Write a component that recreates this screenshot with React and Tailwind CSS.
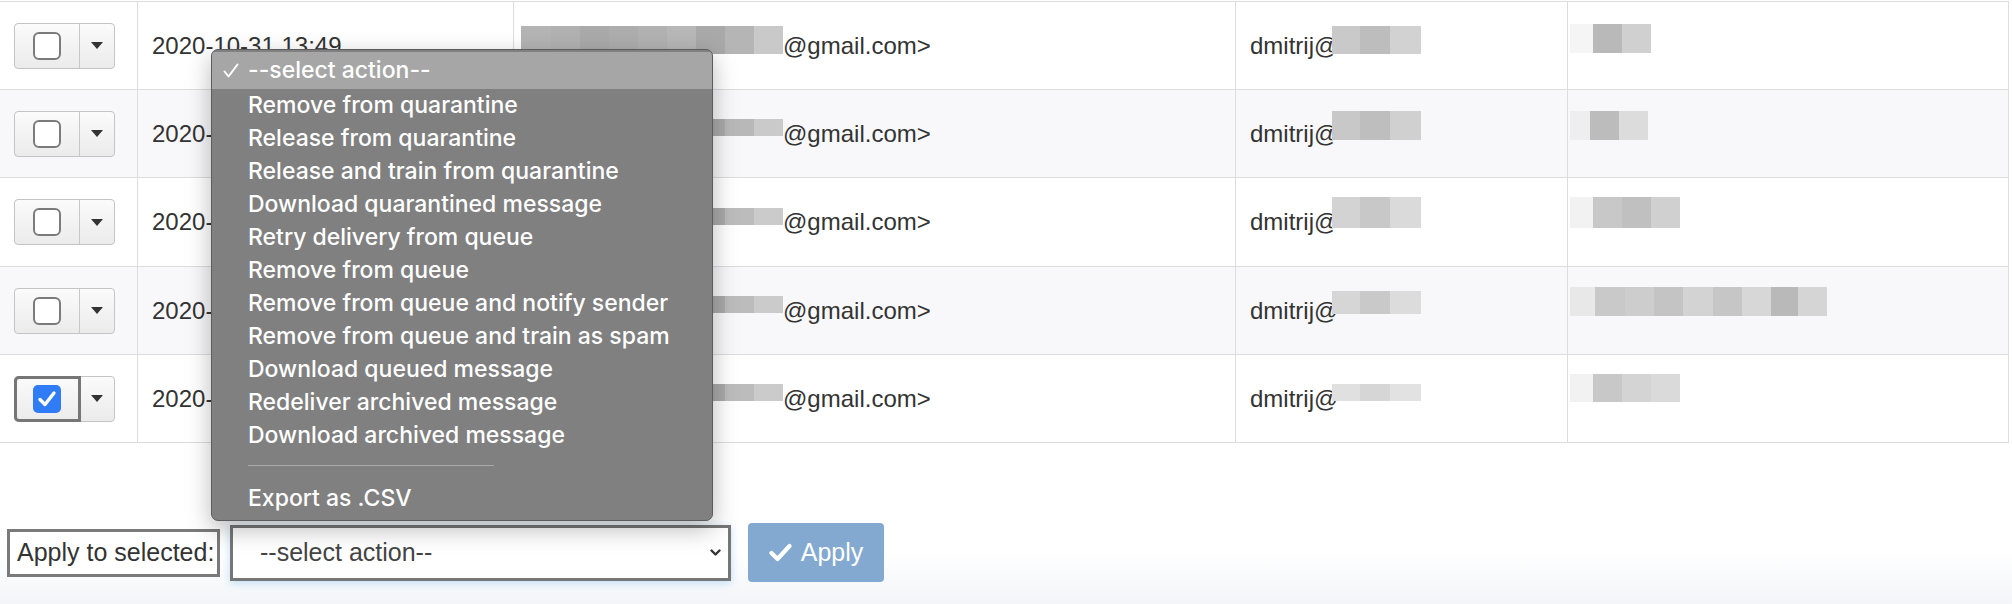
import React from 'react';
import clsx from 'clsx';

const menuItems = [
  'Remove from quarantine',
  'Release from quarantine',
  'Release and train from quarantine',
  'Download quarantined message',
  'Retry delivery from queue',
  'Remove from queue',
  'Remove from queue and notify sender',
  'Remove from queue and train as spam',
  'Download queued message',
  'Redeliver archived message',
  'Download archived message',
];

// redacted bits of the screenshot: [width, colour]
const rows = [
  {
    h: 'h-[88px]',
    striped: false,
    checked: false,
    fromTiles: [[30, '#b4b4b4'], [29, '#b1b1b1'], [29, '#aaaaaa'], [29, '#adadad'], [29, '#b2b2b2'], [29, '#b7b7b7'], [29, '#a9a9a9'], [29, '#b5b5b5'], [29, '#c9c9c9']],
    fromShift: -6,
    fromH: 28,
    toTiles: [[28, '#c9c9c9'], [30, '#bdbdbd'], [31, '#d2d2d2']],
    toShift: -6,
    toH: 28,
    subjTiles: [[23, '#f5f5f5'], [29, '#b9b9b9'], [29, '#d0d0d0']],
    subjShift: -7,
    subjH: 29,
  },
  {
    h: 'h-[88px]',
    striped: true,
    checked: false,
    fromTiles: [[30, '#bcbcbc'], [29, '#b6b6b6'], [29, '#b0b0b0'], [29, '#b9b9b9'], [29, '#b3b3b3'], [29, '#bdbdbd'], [29, '#aaaaaa'], [29, '#b8b8b8'], [29, '#cacaca']],
    fromShift: -6,
    fromH: 17,
    toTiles: [[28, '#c8c8c8'], [30, '#bebebe'], [31, '#d0d0d0']],
    toShift: -8,
    toH: 29,
    subjTiles: [[20, '#eeeef0'], [29, '#bcbcbc'], [29, '#dcdcdc']],
    subjShift: -8,
    subjH: 29,
  },
  {
    h: 'h-[89px]',
    striped: false,
    checked: false,
    fromTiles: [[30, '#bcbcbc'], [29, '#b6b6b6'], [29, '#b0b0b0'], [29, '#b9b9b9'], [29, '#b3b3b3'], [29, '#bdbdbd'], [29, '#aaaaaa'], [29, '#bcbcbc'], [29, '#cbcbcb']],
    fromShift: -6,
    fromH: 17,
    toTiles: [[28, '#d3d3d3'], [30, '#c8c8c8'], [31, '#dadada']],
    toShift: -10,
    toH: 31,
    subjTiles: [[23, '#f2f2f2'], [29, '#c8c8c8'], [29, '#c0c0c0'], [29, '#d0d0d0']],
    subjShift: -10,
    subjH: 31,
  },
  {
    h: 'h-[88px]',
    striped: true,
    checked: false,
    fromTiles: [[30, '#bcbcbc'], [29, '#b6b6b6'], [29, '#b0b0b0'], [29, '#b9b9b9'], [29, '#b3b3b3'], [29, '#bdbdbd'], [29, '#aaaaaa'], [29, '#bcbcbc'], [29, '#cbcbcb']],
    fromShift: -6,
    fromH: 17,
    toTiles: [[28, '#d6d6d6'], [30, '#c9c9c9'], [31, '#dcdcdc']],
    toShift: -8,
    toH: 23,
    subjTiles: [[25, '#e8e8e8'], [30, '#c9c9c9'], [29, '#cdcdcd'], [29, '#c4c4c4'], [30, '#d3d3d3'], [29, '#c6c6c6'], [29, '#d7d7d7'], [27, '#b9b9b9'], [29, '#d5d5d5']],
    subjShift: -9,
    subjH: 29,
  },
  {
    h: 'h-[88px]',
    striped: false,
    checked: true,
    fromTiles: [[30, '#bcbcbc'], [29, '#b6b6b6'], [29, '#b0b0b0'], [29, '#b9b9b9'], [29, '#b3b3b3'], [29, '#bdbdbd'], [29, '#aaaaaa'], [29, '#bcbcbc'], [29, '#cbcbcb']],
    fromShift: -6,
    fromH: 17,
    toTiles: [[28, '#e0e0e0'], [30, '#d6d6d6'], [31, '#e2e2e2']],
    toShift: -6,
    toH: 17,
    subjTiles: [[23, '#f2f2f2'], [29, '#c8c8c8'], [29, '#d4d4d4'], [29, '#dadada']],
    subjShift: -11,
    subjH: 28,
  },
];

const Mosaic = ({ tiles, h, shift, className }) => (
  <div className={clsx('flex shrink-0', className)} style={{ height: h, transform: `translateY(${shift}px)` }}>
    {tiles.map(([w, c], i) => (
      <div key={i} style={{ width: w, background: c }} />
    ))}
  </div>
);

const SplitCheck = ({ checked }) => (
  <div className="flex h-[46px] w-[101px] rounded-[4px] border border-[#c4c4c4] bg-[linear-gradient(to_bottom,#fbfbfb,#ebebeb)]">
    <div
      className={clsx(
        'flex w-[65px] items-center justify-center rounded-l-[4px] border-r border-[#c8c8c8]',
        checked && 'outline-solid outline-3 outline-offset-[-2px] outline-[#767676]'
      )}
    >
      {checked ? (
        <div className="flex h-[28px] w-[28px] items-center justify-center rounded-[5px] bg-[#2f7cf6]">
          <svg width="20" height="18" viewBox="0 0 20 18">
            <path d="M3 9.5 L8 14.5 L17 3" fill="none" stroke="#fff" strokeWidth="3.4" strokeLinecap="round" strokeLinejoin="round" />
          </svg>
        </div>
      ) : (
        <div className="h-[28px] w-[28px] rounded-[6px] border-2 border-[#7b7b7b] bg-white" />
      )}
    </div>
    <div className="flex flex-1 items-center justify-center">
      <div className="h-0 w-0 border-x-[6px] border-t-[7px] border-x-transparent border-t-[#333]" />
    </div>
  </div>
);

const Row = ({ r }) => (
  <div
    className={clsx(
      'grid grid-cols-[137px_376px_722px_332px_441px] border-b border-[#dddddd]',
      r.h,
      r.striped ? 'bg-[#f8f8fa]' : 'bg-white'
    )}
  >
    <div className="flex items-center pl-[14px]">
      <SplitCheck checked={r.checked} />
    </div>
    <div className="flex items-center border-l border-[#dddddd] pl-[14px] text-[24px]">2020-10-31 13:49</div>
    <div className="flex items-center border-l border-[#dddddd] pl-[7px] text-[24px]">
      <Mosaic tiles={r.fromTiles} h={r.fromH} shift={r.fromShift} />
      <span>@gmail.com&gt;</span>
    </div>
    <div className="flex items-center border-l border-[#dddddd] pl-[14px] text-[24px]">
      <span>dmitrij@</span>
      <Mosaic tiles={r.toTiles} h={r.toH} shift={r.toShift} className="-ml-[6px]" />
    </div>
    <div className="flex items-center border-l border-[#dddddd] pl-[2px]">
      <Mosaic tiles={r.subjTiles} h={r.subjH} shift={r.subjShift} />
    </div>
  </div>
);

const ActionMenu = () => (
  <div className="absolute left-[211px] top-[49px] h-[472px] w-[502px] overflow-hidden rounded-[7px] border border-[#5c5c5c] bg-[#808080] pt-[2px] font-['Inter',sans-serif] text-[23px] font-medium leading-[33px] text-white shadow-[0_8px_24px_rgba(0,0,0,0.28)]">
    <div className="flex items-center bg-[#a6a6a6] py-[2px] pl-[11px]">
      <span className="flex w-[25px] items-center">
        <svg width="16" height="15" viewBox="0 0 16 15">
          <path d="M1.5 8.5 L5.5 13.5 L14.5 1.5" fill="none" stroke="#fff" strokeWidth="2" strokeLinecap="round" strokeLinejoin="round" />
        </svg>
      </span>
      <span>--select action--</span>
    </div>
    {menuItems.map((item) => (
      <div key={item} className="pl-[36px]">
        {item}
      </div>
    ))}
    <div className="h-[30px] pt-[13px]">
      <div className="ml-[36px] h-px w-[246px] bg-[#a9a9a9]" />
    </div>
    <div className="pl-[36px]">Export as .CSV</div>
  </div>
);

export default function App() {
  return (
    <div className="relative h-[604px] w-[2012px] overflow-hidden bg-[linear-gradient(to_bottom,#ffffff_0%,#ffffff_91%,#f3f5f8_100%)] font-['Liberation_Sans',Arial,sans-serif] text-[#333]">
      {/* Messages table */}
      <div className="mt-[1px] w-[2009px] border-t border-r border-[#dddddd]">
        {rows.map((r, i) => (
          <Row key={i} r={r} />
        ))}
      </div>

      {/* Bulk action bar */}
      <div className="mt-[80px] flex items-center pl-[7px] text-[25px]">
        <div className="flex h-[48px] w-[213px] items-center border-[3px] border-[#7a7a7a] bg-white pl-[7px]">Apply to selected:</div>
        <div className="ml-[10px] flex h-[56px] w-[501px] items-center justify-between border-[3px] border-[#767676] bg-white pl-[27px] pr-[7px] text-[#444] shadow-[0_2px_8px_rgba(82,168,236,0.35)]">
          <span>--select action--</span>
          <svg width="11" height="8" viewBox="0 0 11 8">
            <path d="M1.5 1.5 L5.5 5.5 L9.5 1.5" fill="none" stroke="#333" strokeWidth="2.4" strokeLinecap="round" strokeLinejoin="round" />
          </svg>
        </div>
        <button className="ml-[17px] flex h-[59px] w-[136px] items-center justify-center gap-[9px] rounded-[4px] bg-[#84a9d1] text-white">
          <svg width="23" height="19" viewBox="0 0 23 19">
            <path d="M2.5 10 L8.5 16 L20.5 3" fill="none" stroke="#fff" strokeWidth="4.2" strokeLinecap="round" strokeLinejoin="round" />
          </svg>
          <span>Apply</span>
        </button>
      </div>

      <ActionMenu />
    </div>
  );
}
